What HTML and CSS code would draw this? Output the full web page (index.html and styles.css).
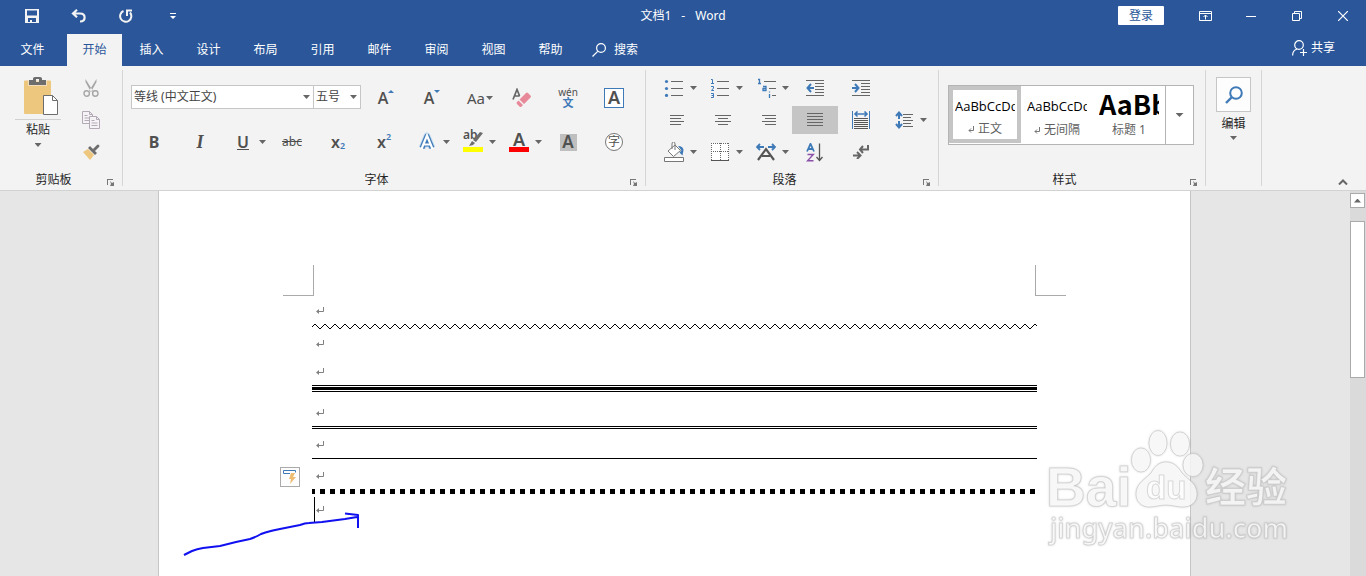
FILE: index.html
```html
<!DOCTYPE html>
<html lang="zh-CN">
<head>
    <meta charset="UTF-8">
    <meta name="viewport" content="width=device-width, initial-scale=1.0">
    <title>文档1 - Word</title>
    <link rel="stylesheet" href="styles.css">
</head>
<body>
<!-- 标题栏 -->
<header class="titlebar">
    <div class="quick-access">
        <button class="bar-btn" aria-label="保存">
            <svg width="14" height="14" viewBox="0 0 14 14"><path fill="#f3f3f3" fill-rule="evenodd" d="M0 0h14v14H0zM2 1.500v5h10v-5zM3 9v4h2v-2h2v2h4V9z"/></svg>
        </button>
        <button class="bar-btn" aria-label="撤消">
            <svg width="16" height="14" viewBox="0 0 16 14"><path fill="none" stroke="#f3f3f3" stroke-width="2.200" d="M6 .8L2 4.500l4 3.700M2 4.500h7c3 0 4.600 1.700 4.600 4 0 2.400-1.600 4-4.600 4"/></svg>
        </button>
        <button class="bar-btn" aria-label="重复">
            <svg width="14" height="14" viewBox="0 0 14 14"><path fill="none" stroke="#f3f3f3" stroke-width="2" d="M4.500 2A5.600 5.600 0 1 0 11 3.500M8 7V1.500H13"/></svg>
        </button>
        <button class="bar-btn" aria-label="自定义快速访问工具栏">
            <svg width="6" height="6" viewBox="0 0 6 6"><path fill="#fff" d="M0 0h6v1H0zM0 3h6L3 6z"/></svg>
        </button>
    </div>
    <h1 class="doc-title"><span>文档1</span><span>-</span><span>Word</span></h1>
    <div class="window-tools">
        <button class="login-btn">登录</button>
        <button class="bar-btn" aria-label="功能区显示选项">
            <svg width="13" height="10" viewBox="0 0 13 10"><path fill="none" stroke="#fff" d="M.5.5h12v9H.5zM.5 2.500h12M6.500 8.500V4M4.500 6l2-2 2 2"/></svg>
        </button>
        <button class="bar-btn" aria-label="最小化">
            <svg width="10" height="10" viewBox="0 0 10 10"><path fill="#fff" d="M0 5h10v1H0z"/></svg>
        </button>
        <button class="bar-btn" aria-label="还原">
            <svg width="10" height="10" viewBox="0 0 10 10"><path fill="none" stroke="#fff" d="M.5 2.500h7v7h-7zM2.500 2.500v-2h7v7h-2"/></svg>
        </button>
        <button class="bar-btn" aria-label="关闭">
            <svg width="10" height="10" viewBox="0 0 10 10"><path fill="none" stroke="#fff" stroke-width="1.200" d="M0 0l10 10M10 0L0 10"/></svg>
        </button>
    </div>
</header>

<!-- 选项卡 -->
<nav class="tabs">
    <button class="tab tab-file">文件</button>
    <button class="tab active">开始</button>
    <button class="tab">插入</button>
    <button class="tab">设计</button>
    <button class="tab">布局</button>
    <button class="tab">引用</button>
    <button class="tab">邮件</button>
    <button class="tab">审阅</button>
    <button class="tab">视图</button>
    <button class="tab">帮助</button>
    <button class="tab-tool">
        <svg width="14" height="14" viewBox="0 0 14 14"><path fill="none" stroke="#fff" stroke-width="1.200" d="M5.700 8.300L.5 13.500"/><circle cx="9" cy="5" r="4.400" fill="none" stroke="#fff" stroke-width="1.200"/></svg>
        <span>搜索</span>
    </button>
    <button class="tab-tool share">
        <svg width="15" height="16" viewBox="0 0 15 16"><circle cx="7" cy="5" r="4.300" fill="none" stroke="#fff" stroke-width="1.200"/><path fill="none" stroke="#fff" stroke-width="1.200" d="M.6 15.500c0-3.500 2-5.800 4.600-6.500M8 12.500h7M11.500 9v7"/></svg>
        <span>共享</span>
    </button>
</nav>

<!-- 功能区 -->
<section class="ribbon">
    <div class="group">
        <div class="group-body clipboard">
            <button class="paste-btn">
                <svg class="paste-icon" width="36" height="38" viewBox="0 0 36 38">
                    <path fill="#eec77f" d="M1 4.500q0-1 1-1h25q1 0 1 1V37H2q-1 0-1-1z"/>
                    <path fill="#f3f3f3" d="M5 2h19v7H5z" opacity=".5"/>
                    <path fill="#6d6d6d" fill-rule="evenodd" d="M6 3h4V1.500Q10 0 12 0h5q2 0 2 1.500V3h4v5H6zM13 2v3h3V2z"/>
                    <path fill="#fff" stroke="#6d6d6d" d="M20.500 18.500h9l5 5v14h-14z"/>
                    <path fill="none" stroke="#6d6d6d" d="M29.500 18.500v5h5"/>
                </svg>
                <span class="paste-label">粘贴</span>
                <i class="caret"></i>
            </button>
            <div class="clip-tools">
                <button class="tool" aria-label="剪切">
                    <svg width="16" height="18" viewBox="0 0 16 18"><path fill="#a6a6a6" d="M2.500 0L10 12l-2 1L2.500 3zM13.500 0L6 12l2 1 5.500-10z"/><circle cx="3.700" cy="14.500" r="2.700" fill="none" stroke="#a6a6a6" stroke-width="1.400"/><circle cx="12.300" cy="14.500" r="2.700" fill="none" stroke="#a6a6a6" stroke-width="1.400"/></svg>
                </button>
                <button class="tool" aria-label="复制">
                    <svg width="18" height="18" viewBox="0 0 18 18"><path fill="#f6f3f7" stroke="#b3aab5" d="M.5.5h7l3 3v9H.5zM7.500.5v3h3M2.500 4.500h3M2.500 7h5M2.500 9.500h5"/><path fill="#f6f3f7" stroke="#b3aab5" d="M7.500 5.500h7l3 3v9h-10zM14.500 5.500v3h3M9.500 9.500h3M9.500 12h6M9.500 14.500h6"/></svg>
                </button>
                <button class="tool" aria-label="格式刷">
                    <svg width="18" height="16" viewBox="0 0 18 16"><path fill="#eec77f" d="M1 8l5-3 6 6-4 5z"/><path fill="#6d6d6d" d="M6 4l2-2 7 7-2 2zM11 5l4-4q1-1 2 0t0 2l-4 4z"/></svg>
                </button>
            </div>
        </div>
        <div class="group-footer"><span>剪贴板</span>
            <button class="launcher" aria-label="剪贴板选项"><svg width="7" height="7" viewBox="0 0 7 7"><path fill="#777" d="M0 0h6v1H1v5H0zM3 2l2 2 2-1v4H3l1-2z"/></svg></button>
        </div>
    </div>

    <div class="group">
        <div class="group-body font-grid">
            <div class="combos">
                <div class="combo combo-name">
                    <select aria-label="字体"><option>等线 (中文正文)</option></select><i class="caret"></i>
                </div>
                <div class="combo combo-size">
                    <select aria-label="字号"><option>五号</option></select><i class="caret"></i>
                </div>
            </div>
            <button class="tool letter size-letter" aria-label="增大字号">A<svg width="6" height="3" viewBox="0 0 6 3"><path fill="#3f7ab8" d="M0 3h6L3 0z"/></svg></button>
            <button class="tool letter size-letter" aria-label="减小字号">A<svg width="6" height="3" viewBox="0 0 6 3"><path fill="#3f7ab8" d="M0 0h6L3 3z"/></svg></button>
            <button class="tool aa" aria-label="更改大小写">Aa<i class="caret"></i></button>
            <button class="tool" aria-label="清除所有格式">
                <svg width="20" height="20" viewBox="0 0 20 20"><path fill="none" stroke="#666" stroke-width="1.700" d="M1 11.500L5 1.500 9 11.500M2.500 8h5"/><path fill="#f3f3f3" d="M7 9l5-5 8 3-9 13H6z"/><path fill="#e8899a" d="M14 5q1-1 2 0l2.500 2.500q1 1 0 2L12 16 7.500 11.500zM6.500 12.500L11 17l-1.500 1.500q-1 1-2 0L5 16q-1-1 0-2z"/></svg>
            </button>
            <button class="tool pinyin" aria-label="拼音指南"><span>wén</span><b>文</b></button>
            <button class="tool" aria-label="字符边框"><span class="boxed-letter">A</span></button>

            <button class="tool letter bold" aria-label="加粗">B</button>
            <button class="tool letter italic" aria-label="倾斜">I</button>
            <button class="tool split letter underline" aria-label="下划线"><span>U</span><i class="caret"></i></button>
            <button class="tool strike" aria-label="删除线">abc</button>
            <button class="tool letter script" aria-label="下标">x<sub>2</sub></button>
            <button class="tool letter script" aria-label="上标">x<sup>2</sup></button>
            <button class="tool split effect" aria-label="文本效果">
                <svg width="20" height="20" viewBox="0 0 20 20"><path fill="none" stroke="#c5dcf1" stroke-width="7" stroke-linejoin="round" d="M5 16L10 4l5 12M7 12h6"/><path fill="none" stroke="#3f7ab8" stroke-width="5" stroke-linejoin="round" d="M5 16L10 4l5 12M7 12h6"/><path fill="none" stroke="#fff" stroke-width="2.200" d="M4.500 17L10 3.500 15.500 17M7 12.500h6"/></svg>
                <i class="caret"></i>
            </button>
            <button class="tool split color-tool" aria-label="突出显示颜色">
                <span class="color-mark mark-yellow"><em>ab</em><svg width="15" height="14" viewBox="0 0 15 14"><path fill="#6d6d6d" d="M12 0l3 1-7 9-3-2zM4 9l3 2-2 2-4 1z"/></svg></span>
                <i class="caret"></i>
            </button>
            <button class="tool split color-tool" aria-label="字体颜色">
                <span class="color-mark mark-red"><b>A</b></span>
                <i class="caret"></i>
            </button>
            <button class="tool" aria-label="字符底纹"><span class="shaded-letter">A</span></button>
            <button class="tool" aria-label="带圈字符"><span class="circled">字</span></button>
        </div>
        <div class="group-footer"><span>字体</span>
            <button class="launcher" aria-label="字体选项"><svg width="7" height="7" viewBox="0 0 7 7"><path fill="#777" d="M0 0h6v1H1v5H0zM3 2l2 2 2-1v4H3l1-2z"/></svg></button>
        </div>
    </div>

    <div class="group">
        <div class="group-body para-grid">
            <button class="tool split" aria-label="项目符号">
                <svg width="20" height="18" viewBox="0 0 20 18"><path stroke="#666" d="M7 2.500h12M7 9.500h12M7 16.500h12"/><g fill="#3f7ab8"><circle cx="2.500" cy="2.500" r="1.600"/><circle cx="2.500" cy="9.500" r="1.600"/><circle cx="2.500" cy="16.400" r="1.600"/></g></svg>
                <i class="caret"></i>
            </button>
            <button class="tool split" aria-label="编号">
                <svg width="20" height="20" viewBox="0 0 20 20"><path stroke="#666" d="M7 3.500h12M7 10.500h12M7 17.500h12"/><path fill="none" stroke="#3f7ab8" d="M1 1.500h1.500v4M1 5.500h3M1 8.500h2.500v1.500l-2 2.500H4M1 15.500h2.500v4H1M1.500 17.500h2"/></svg>
                <i class="caret"></i>
            </button>
            <button class="tool split" aria-label="多级列表">
                <svg width="20" height="20" viewBox="0 0 20 20"><path stroke="#666" d="M8 3.500h12M13 10.500h7M16 17.500h4"/><path fill="none" stroke="#3f7ab8" stroke-width="1.300" d="M2 1.500h1.500v4M2 5.500h3M7 8.500h3v4H7v-2h3M13.500 16v4M13.500 13.500v1"/></svg>
                <i class="caret"></i>
            </button>
            <button class="tool" aria-label="减少缩进量">
                <svg width="18" height="16" viewBox="0 0 18 16"><path stroke="#666" d="M0 .5h18M9 3.500h9M9 6.500h9M9 9.500h9M9 12.500h9M0 15.500h18"/><path fill="none" stroke="#3f7ab8" stroke-width="2" d="M8 8H1.500M5 4L1.500 8 5 12"/></svg>
            </button>
            <button class="tool" aria-label="增加缩进量">
                <svg width="18" height="16" viewBox="0 0 18 16"><path stroke="#666" d="M0 .5h18M9 3.500h9M9 6.500h9M9 9.500h9M9 12.500h9M0 15.500h18"/><path fill="none" stroke="#3f7ab8" stroke-width="2" d="M0 8h6.500M3 4l3.500 4L3 12"/></svg>
            </button>

            <button class="tool new-row" aria-label="左对齐">
                <svg width="14" height="11" viewBox="0 0 14 11"><path stroke="#666" d="M0 .5h14M0 3.500h11M0 6.500h14M0 9.500h11"/></svg>
            </button>
            <button class="tool" aria-label="居中">
                <svg width="16" height="11" viewBox="0 0 16 11"><path stroke="#666" d="M0 .5h16M3 3.500h10M0 6.500h16M3 9.500h10"/></svg>
            </button>
            <button class="tool" aria-label="右对齐">
                <svg width="14" height="11" viewBox="0 0 14 11"><path stroke="#666" d="M0 .5h14M3 3.500h11M0 6.500h14M3 9.500h11"/></svg>
            </button>
            <button class="tool pressed" aria-label="两端对齐">
                <svg width="16" height="14" viewBox="0 0 16 14"><path stroke="#666" d="M0 .5h16M0 3.500h16M0 6.500h16M0 9.500h16M0 12.500h16"/></svg>
            </button>
            <button class="tool" aria-label="分散对齐">
                <svg width="18" height="18" viewBox="0 0 18 18"><path stroke="#3f7ab8" d="M.5 0v18M17.500 0v18"/><path fill="none" stroke="#3f7ab8" stroke-width="1.600" d="M3 3h12M5.500.5L3 3l2.500 2.500M12.500.5L15 3l-2.500 2.500"/><path stroke="#555" d="M2 7.500h14M2 9.500h14M2 11.500h14M2 13.500h14M2 15.500h14M2 17.500h14"/></svg>
            </button>
            <button class="tool split" aria-label="行距">
                <svg width="20" height="18" viewBox="0 0 20 18"><path fill="none" stroke="#3f7ab8" stroke-width="2" d="M5 1.500v15M2 5l3-3.500L8 5M2 13l3 3.500L8 13"/><path fill="none" stroke="#f3f3f3" stroke-width="2" d="M4 9h2"/><path stroke="#666" d="M9 3.500h10M9 6.500h8M9 9.500h10M9 12.500h8M9 15.500h10"/></svg>
                <i class="caret"></i>
            </button>

            <button class="tool split" aria-label="底纹">
                <svg width="20" height="20" viewBox="0 0 20 20"><path fill="#fff" stroke="#777" d="M.5 15.500h19v4H.5zM4 9l7-6 5.500 5.500-7 6zM8 7V2q0-2 1.500-2t1.500 2v6"/><path fill="#3f7ab8" d="M14 4q5 0 5.500 4l-1 5.500-3-3 2-2z"/></svg>
                <i class="caret"></i>
            </button>
            <button class="tool split" aria-label="边框">
                <svg width="20" height="18" viewBox="0 0 20 18"><path fill="#fff" d="M1 0h18v18H1z"/><path fill="none" stroke="#666" stroke-dasharray="1 1" d="M1.500 0v17M18.500 0v17M1 .5h18M10.500 0v17M1 8.500h18"/><path stroke="#555" d="M1 17.500h18"/></svg>
                <i class="caret"></i>
            </button>
            <button class="tool split" aria-label="中文版式">
                <svg width="20" height="18" viewBox="0 0 20 18"><path fill="none" stroke="#3f7ab8" stroke-width="1.800" d="M1 4h7M4 1L1 4l3 3M12 4h7M16 1l3 3-3 3"/><path fill="none" stroke="#555" stroke-width="2.200" d="M2 17L10 6l8 11M6 13h8"/></svg>
                <i class="caret"></i>
            </button>
            <button class="tool" aria-label="排序">
                <svg width="18" height="19" viewBox="0 0 18 19"><path fill="none" stroke="#3f7ab8" stroke-width="1.800" d="M1 8.500L4.500.8 8 8.500M2.500 6h4"/><path fill="none" stroke="#8a4fa8" stroke-width="1.400" d="M1.500 11.500h5.800l-5.800 6.300h6"/><path fill="none" stroke="#555" stroke-width="1.300" d="M13.500.5v17M10.500 14l3 3.500 3-3.500"/></svg>
            </button>
            <button class="tool" aria-label="显示编辑标记">
                <svg width="16" height="14" viewBox="0 0 16 14"><path fill="none" stroke="#666" stroke-width="2" d="M15 0v4.500H7M10 1L7 4.500 10 8M0 10.500h7M4 7l3.500 3.500L4 14"/></svg>
            </button>
        </div>
        <div class="group-footer"><span>段落</span>
            <button class="launcher" aria-label="段落选项"><svg width="7" height="7" viewBox="0 0 7 7"><path fill="#777" d="M0 0h6v1H1v5H0zM3 2l2 2 2-1v4H3l1-2z"/></svg></button>
        </div>
    </div>

    <div class="group">
        <div class="group-body styles-body">
            <div class="gallery">
                <button class="style-item selected">
                    <span class="sample">AaBbCcDd</span>
                    <span class="style-name"><svg width="6" height="7" viewBox="0 0 6 7"><path fill="none" stroke="#777" d="M5.500 0v4.500H1M3 2.500l-2 2 2 2"/></svg>正文</span>
                </button>
                <button class="style-item">
                    <span class="sample">AaBbCcDd</span>
                    <span class="style-name"><svg width="6" height="7" viewBox="0 0 6 7"><path fill="none" stroke="#777" d="M5.500 0v4.500H1M3 2.500l-2 2 2 2"/></svg>无间隔</span>
                </button>
                <button class="style-item">
                    <span class="sample sample-heading">AaBb</span>
                    <span class="style-name">标题 1</span>
                </button>
                <button class="gallery-more" aria-label="其他样式"><i class="caret caret-big"></i></button>
            </div>
        </div>
        <div class="group-footer"><span>样式</span>
            <button class="launcher" aria-label="样式选项"><svg width="7" height="7" viewBox="0 0 7 7"><path fill="#777" d="M0 0h6v1H1v5H0zM3 2l2 2 2-1v4H3l1-2z"/></svg></button>
        </div>
    </div>

    <div class="group">
        <button class="edit-btn">
            <span class="edit-icon">
                <svg width="18" height="18" viewBox="0 0 18 18"><circle cx="11" cy="7" r="5.800" fill="none" stroke="#3f7ab8" stroke-width="2"/><path stroke="#3f7ab8" stroke-width="2.400" d="M6.500 11.500L1 17"/></svg>
            </span>
            <span>编辑</span>
            <i class="caret"></i>
        </button>
    </div>

    <button class="collapse-btn" aria-label="折叠功能区">
        <svg width="10" height="6" viewBox="0 0 10 6"><path fill="none" stroke="#666" stroke-width="2" d="M1 5.500l4-4 4 4"/></svg>
    </button>
</section>

<!-- 文档区 -->
<main class="workspace">
    <div class="canvas">
        <article class="page">
            <div class="crop-marks"><i class="crop crop-left"></i><i class="crop crop-right"></i></div>
            <p class="line"><svg width="8" height="8" viewBox="0 0 8 8"><path fill="none" stroke="#808080" d="M7.500 0v4.500H1"/><path fill="#808080" d="M0 4.500L3 2v5z"/></svg></p>
            <svg class="wave" width="100%" height="5">
                <defs>
                    <pattern id="zigzag" width="10" height="5" patternUnits="userSpaceOnUse">
                        <path d="M0 2h1v1H0zM1 1h1v1H1zM2 0h2v1H2zM4 1h1v1H4zM5 2h1v1H5zM6 3h1v1H6zM7 4h2v1H7zM9 3h1v1H9z"/>
                    </pattern>
                </defs>
                <rect width="100%" height="5" fill="url(#zigzag)"/>
            </svg>
            <p class="line"><svg width="8" height="8" viewBox="0 0 8 8"><path fill="none" stroke="#808080" d="M7.500 0v4.500H1"/><path fill="#808080" d="M0 4.500L3 2v5z"/></svg></p>
            <p class="line"><svg width="8" height="8" viewBox="0 0 8 8"><path fill="none" stroke="#808080" d="M7.500 0v4.500H1"/><path fill="#808080" d="M0 4.500L3 2v5z"/></svg></p>
            <div class="rule rule-triple"></div>
            <p class="line"><svg width="8" height="8" viewBox="0 0 8 8"><path fill="none" stroke="#808080" d="M7.500 0v4.500H1"/><path fill="#808080" d="M0 4.500L3 2v5z"/></svg></p>
            <div class="rule rule-double"></div>
            <p class="line"><svg width="8" height="8" viewBox="0 0 8 8"><path fill="none" stroke="#808080" d="M7.500 0v4.500H1"/><path fill="#808080" d="M0 4.500L3 2v5z"/></svg></p>
            <div class="rule rule-single"></div>
            <p class="line">
                <button class="autofix" aria-label="自动更正选项"><svg width="14" height="14" viewBox="0 0 14 14"><path fill="none" stroke="#3f7ab8" d="M7 3.500H.5v-3h12v2"/><path fill="#eebd74" d="M8 3h4l-2 4h3l-6 7 1-5H6z"/></svg></button>
                <svg width="8" height="8" viewBox="0 0 8 8"><path fill="none" stroke="#808080" d="M7.500 0v4.500H1"/><path fill="#808080" d="M0 4.500L3 2v5z"/></svg>
            </p>
            <div class="rule rule-dots"></div>
            <p class="line line-active"><i class="cursor"></i><svg width="8" height="8" viewBox="0 0 8 8"><path fill="none" stroke="#808080" d="M7.500 0v4.500H1"/><path fill="#808080" d="M0 4.500L3 2v5z"/></svg></p>
            <svg class="ink" width="190" height="56" viewBox="180 506 190 56"><path fill="none" stroke="#1010f0" stroke-width="2" stroke-linejoin="round" d="M184 555L192 551Q197 549 203 548L220 546 236 542 250 539Q256 537 261 534 268 531 290 527L300 525Q305 523 309 523L322 522 345 519 357 517M345 513.500L358 515V528"/></svg>
        </article>
    </div>
    <div class="scrollbar">
        <button class="scroll-up" aria-label="向上滚动"><i></i></button>
        <div class="scroll-thumb"></div>
    </div>

    <svg class="watermark" width="264" height="130" viewBox="1040 424 264 130">
        <g fill="#fff" fill-opacity=".8" stroke="#bbb" stroke-opacity=".55" stroke-width="1">
            <ellipse cx="1141" cy="460" rx="9.500" ry="12"/>
            <ellipse cx="1158" cy="443" rx="9" ry="12.500"/>
            <ellipse cx="1180" cy="444" rx="9.500" ry="12"/>
            <ellipse cx="1193" cy="465" rx="10" ry="11.500"/>
            <path d="M1166 462c-8 0-12 6-15 11-5 6-15 10-15 21 0 8 6 13 13 13 6 0 11-2 17-2s11 2 17 2c8 0 14-5 14-13 0-11-10-15-15-21-4-6-8-11-16-11z"/>
            <text class="wm-latin" x="1046" y="506">Bai</text>
            <text class="wm-du" x="1146" y="499">du</text>
            <text class="wm-cjk" x="1205" y="502">经验</text>
            <text class="wm-url" x="1050" y="538">jingyan.baidu.com</text>
        </g>
    </svg>
</main>
</body>
</html>
```

FILE: styles.css
```css
* {
    box-sizing: border-box;
}
body {
    margin: 0;
    height: 100vh;
    display: flex;
    flex-direction: column;
    overflow: hidden;
    font-family: "Noto Sans", "Noto Sans CJK SC", sans-serif;
    font-size: 12px;
    line-height: 16px;
    color: #262626;
    background-color: #e6e6e6;
}
button, select {
    font: inherit;
    color: inherit;
    margin: 0;
    padding: 0;
    border: none;
    background: none;
    cursor: pointer;
}
svg {
    display: block;
    flex: none;
}
.caret {
    flex: none;
    width: 7px;
    height: 4px;
    background-color: #666;
    clip-path: polygon(0 0, 100% 0, 50% 100%);
}
.caret-big {
    width: 8px;
}

/* 标题栏 */
.titlebar {
    display: grid;
    grid-template-columns: 1fr auto 1fr;
    align-items: center;
    height: 34px;
    padding-bottom: 3px;
    background-color: #2b579a;
    color: #fff;
}
.quick-access {
    display: flex;
    gap: 1px;
    padding-left: 9px;
}
.bar-btn {
    width: 46px;
    height: 30px;
    display: flex;
    align-items: center;
    justify-content: center;
}
.doc-title {
    display: flex;
    gap: 10px;
    margin: 0;
    font-size: 12px;
    font-weight: normal;
}
.window-tools {
    display: flex;
    align-items: center;
    justify-content: flex-end;
}
.login-btn {
    width: 46px;
    height: 19px;
    margin-right: 18px;
    border-radius: 1px;
    background-color: #fff;
    color: #2b579a;
}

/* 选项卡 */
.tabs {
    display: flex;
    gap: 2px;
    height: 32px;
    padding-right: 31px;
    background-color: #2b579a;
    color: #fff;
}
.tab {
    width: 55px;
}
.tab-file {
    width: 65px;
}
.tab.active {
    background-color: #f3f3f3;
    color: #2b579a;
}
.tab-tool {
    display: flex;
    align-items: center;
    gap: 8px;
    margin-left: 12px;
}
.share {
    gap: 4px;
    margin-left: auto;
    padding-bottom: 4px;
}

/* 功能区 */
.ribbon {
    display: flex;
    height: 125px;
    background-color: #f3f3f3;
    border-bottom: 1px solid #d2d2d2;
}
.group {
    display: flex;
    flex-direction: column;
    margin: 4px 0;
    border-right: 1px solid #d5d5d5;
}
.group-body {
    flex: 1;
    padding: 4px 8px 0;
}
.group-footer {
    display: flex;
    align-items: center;
    height: 12px;
}
.group-footer span {
    flex: 1;
    text-align: center;
}
.launcher {
    width: 15px;
    padding-top: 4px;
}
.tool {
    width: 46px;
    height: 28px;
    display: flex;
    align-items: center;
    justify-content: center;
    color: #505050;
}
.tool.split {
    justify-content: flex-end;
    gap: 6px;
    padding-right: 3px;
}
.tool.pressed {
    background-color: #c5c5c5;
}

/* 剪贴板 */
.clipboard {
    display: flex;
}
.paste-btn {
    width: 60px;
    display: flex;
    flex-direction: column;
    align-items: center;
    padding: 3px 6px 16px;
}
.paste-icon {
    margin-left: 5px;
}
.paste-label {
    width: 46px;
    margin: 4px 0 5px;
    padding-top: 2px;
    border-top: 1px solid #d0d0d0;
}
.clip-tools {
    display: flex;
    flex-direction: column;
    gap: 4px;
}

/* 字体 */
.font-grid {
    display: grid;
    grid-template-columns: repeat(11, 46px);
    grid-auto-rows: 28px;
    row-gap: 16px;
    padding-top: 14px;
}
.combos {
    grid-column: span 5;
    display: flex;
    align-items: center;
    padding-bottom: 2px;
}
.combo {
    display: flex;
    align-items: center;
    height: 24px;
    padding-right: 3px;
    border: 1px solid #c6c6c6;
    background-color: #fff;
}
.combo select {
    flex: 1;
    appearance: none;
    padding-left: 2px;
    outline: none;
    color: #444;
}
.combo-name {
    width: 183px;
}
.combo-size {
    width: 48px;
    margin-left: -1px;
}
.letter {
    font-size: 16px;
    font-weight: 600;
}
.size-letter {
    font-family: "Open Sans", sans-serif;
    padding-left: 4px;
}
.size-letter svg {
    margin-bottom: 14px;
}
.aa {
    padding-left: 8px;
    font-size: 15px;
    gap: 1px;
}
.pinyin {
    flex-direction: column;
    font-size: 10px;
    line-height: 9px;
}
.pinyin b {
    color: #3f7ab8;
    font-size: 11px;
    line-height: 12px;
}
.boxed-letter {
    width: 20px;
    height: 20px;
    border: 1px solid #3f7ab8;
    background-color: #fff;
    font-size: 18px;
    font-weight: 600;
    line-height: 17px;
}
.bold {
    font-weight: bold;
}
.italic {
    font-family: "Liberation Serif", serif;
    font-size: 18px;
    font-style: italic;
    font-weight: bold;
}
.underline span {
    width: 20px;
    text-align: center;
    text-decoration: underline;
}
.strike {
    font-size: 12px;
    text-decoration: line-through;
}
.script sub, .script sup {
    color: #3f7ab8;
    font-size: 9px;
    line-height: 10px;
}
.script sub {
    padding-top: 8px;
}
.script sup {
    padding-bottom: 10px;
}
.color-mark {
    position: relative;
    width: 20px;
    height: 20px;
    border-bottom: 5px solid;
    line-height: 14px;
}
.color-mark b {
    font-size: 18px;
    font-weight: 600;
}
.color-mark em {
    position: absolute;
    left: 0;
    top: -4px;
    font-size: 12px;
    font-style: normal;
    font-weight: 600;
}
.color-mark svg {
    position: absolute;
    right: 0;
    top: 0;
}
.mark-yellow {
    border-color: #ff0;
}
.mark-red {
    border-color: #f00;
}
.shaded-letter {
    width: 17px;
    height: 17px;
    background-color: #bfbfbf;
    font-size: 17px;
    font-weight: 600;
    line-height: 16px;
}
.circled {
    width: 18px;
    height: 18px;
    border: 1px solid #777;
    border-radius: 50%;
    background-color: #fff;
    font-size: 12px;
    line-height: 15px;
}

/* 段落 */
.para-grid {
    display: grid;
    grid-template-columns: repeat(6, 46px);
    grid-auto-rows: 28px;
    row-gap: 4px;
}
.new-row {
    grid-column-start: 1;
}

/* 样式 */
.styles-body {
    padding: 15px 11px 0 9px;
}
.gallery {
    display: flex;
    height: 60px;
    border: 1px solid #b4b4b4;
    background-color: #fff;
}
.style-item {
    width: 72px;
    height: 58px;
    display: flex;
    flex-direction: column;
    align-items: center;
    padding: 6px;
}
.style-item.selected {
    height: 57px;
    padding: 2px;
    border: 4px solid #c5c5c5;
}
.sample {
    width: 60px;
    height: 30px;
    overflow: hidden;
    font-family: "Open Sans", sans-serif;
    font-size: 13px;
    line-height: 28px;
    text-align: left;
    color: #000;
}
.sample-heading {
    font-family: "Noto Sans CJK SC", sans-serif;
    font-size: 27px;
    font-weight: bold;
    line-height: 24px;
}
.style-name {
    display: flex;
    align-items: center;
    gap: 4px;
    color: #5f5f5f;
}
.gallery-more {
    width: 28px;
    display: flex;
    align-items: center;
    justify-content: center;
    border-left: 1px solid #b4b4b4;
}

/* 编辑 */
.edit-btn {
    display: flex;
    flex-direction: column;
    align-items: center;
    gap: 4px;
    padding: 7px 10px;
}
.edit-icon {
    width: 35px;
    height: 35px;
    display: flex;
    align-items: center;
    justify-content: center;
    border: 1px solid #c6c6c6;
    background-color: #fdfdfd;
}
.collapse-btn {
    align-self: flex-end;
    margin-left: auto;
    padding: 5px 18px;
}

/* 文档区 */
.workspace {
    position: relative;
    flex: 1;
    display: flex;
    min-height: 0;
    overflow: hidden;
}
.canvas {
    flex: 1;
    display: flex;
    justify-content: center;
    padding-right: 1px;
}
.page {
    position: relative;
    width: 1033px;
    padding: 74px 153px 0;
    border: solid #c6c6c6;
    border-width: 0 1px;
    background-color: #fff;
}
.crop-marks {
    display: flex;
    justify-content: space-between;
    margin: 0 -29px;
}
.crop {
    width: 31px;
    height: 31px;
    border-bottom: 1px solid #aaa;
}
.crop-left {
    border-right: 1px solid #aaa;
}
.crop-right {
    border-left: 1px solid #aaa;
}
.line {
    position: relative;
    display: flex;
    align-items: center;
    height: 28px;
    margin: 0;
    padding: 2px 0 0 4px;
}
.line-active {
    gap: 1px;
    padding: 0 0 0 2px;
}
.cursor {
    width: 1px;
    height: 26px;
    background-color: #000;
}
.rule {
    background-color: #000;
}
.rule-triple {
    height: 7px;
    margin-bottom: 6px;
    background: linear-gradient(#000 1px, #fff 1px, #fff 2px, #000 2px, #000 5px, #fff 5px, #fff 6px, #000 6px);
}
.rule-double {
    height: 3px;
    margin-bottom: 1px;
    background: none;
    border: solid #000;
    border-width: 1px 0;
}
.rule-single {
    height: 1px;
    margin-bottom: 2px;
}
.rule-dots {
    height: 5px;
    margin-bottom: 2px;
    background: linear-gradient(90deg, #000 5px, transparent 5px) -2px 0 / 10px 5px;
}
.autofix {
    position: absolute;
    left: -32px;
    top: 6px;
    width: 20px;
    height: 20px;
    padding: 2px;
    border: 1px solid #aaa;
    background-color: #fdfdfd;
}
.ink {
    position: absolute;
    left: 21px;
    top: 315px;
}

/* 滚动条 */
.scrollbar {
    width: 16px;
    display: flex;
    flex-direction: column;
    gap: 13px;
    padding: 2px 1px 0 0;
    background-color: #dadada;
}
.scroll-up {
    height: 15px;
    display: flex;
    align-items: center;
    justify-content: center;
    border: 1px solid #aaa;
    background-color: #fff;
}
.scroll-up i {
    width: 7px;
    height: 4px;
    background-color: #666;
    clip-path: polygon(0 100%, 100% 100%, 50% 0);
}
.scroll-thumb {
    height: 157px;
    border: 1px solid #aaa;
    background-color: #fff;
}

/* 水印 */
.watermark {
    position: absolute;
    right: 62px;
    top: 233px;
    filter: drop-shadow(0 0 1px rgba(0, 0, 0, 0.2));
    pointer-events: none;
}
.wm-latin {
    font-family: "Liberation Sans", sans-serif;
    font-size: 55px;
    font-weight: bold;
}
.wm-du {
    font-family: "Liberation Sans", sans-serif;
    font-size: 33px;
    font-weight: bold;
}
.wm-cjk {
    font-family: "Noto Sans CJK SC", sans-serif;
    font-size: 41px;
    font-weight: bold;
}
.wm-url {
    font-family: "Noto Sans", sans-serif;
    font-size: 27px;
    font-weight: 500;
}
```
